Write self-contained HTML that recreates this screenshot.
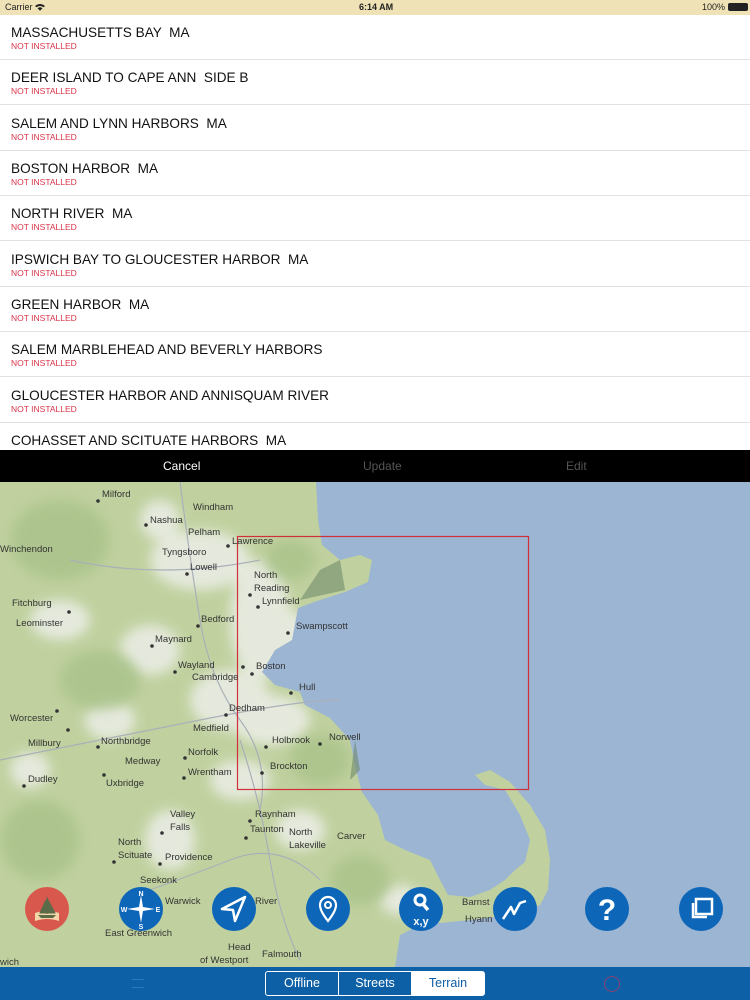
<!DOCTYPE html>
<html><head><meta charset="utf-8">
<style>
*{margin:0;padding:0;box-sizing:border-box}
body{width:750px;height:1000px;overflow:hidden;font-family:"Liberation Sans",sans-serif;background:#fff;position:relative}
.status{position:absolute;top:0;left:0;width:750px;height:15px;background:#efe2b6;font-size:9px;color:#222}
.status span{position:absolute;top:2px}
.row{position:absolute;left:0;width:750px;height:45px;border-bottom:1px solid #e2e2e2}
.row .t{position:absolute;left:11px;top:10px;font-size:13.6px;color:#111;white-space:pre}
.row .s{position:absolute;left:11px;top:26px;font-size:8.5px;color:#d9344a}
.tb{position:absolute;top:450px;left:0;width:750px;height:32px;background:#000;font-size:12px}
.tb span{position:absolute;top:9px}
.map{position:absolute;top:482px;left:0;width:750px;height:485px;overflow:hidden;background:#9bb5d3}
.bb{position:absolute;top:967px;left:0;width:750px;height:33px;background:#0d5fa6}
.seg{position:absolute;top:4px;left:265px;width:220px;height:25px;border:1px solid #fff;border-radius:3px;display:flex;font-size:12.5px}
.seg div{flex:1;text-align:center;line-height:23px;color:#fff;border-right:1px solid #fff}
.seg div:last-child{border:none;background:#fff;color:#0d5fa6}
.btn{position:absolute;top:887px;width:44px;height:44px}
</style></head><body>
<div class="status"><span style="left:5px">Carrier <svg width="10" height="8" viewBox="0 0 10 8" style="vertical-align:-1px"><path d="M0 3 Q5 -1 10 3 L8.6 4.3 Q5 1.6 1.4 4.3Z M2.5 5.2 Q5 3.3 7.5 5.2 L5 7.8Z" fill="#222"/></svg></span><span style="left:359px;font-weight:bold">6:14 AM</span><span style="left:702px">100% <span style="display:inline-block;width:20px;height:8px;border:1px solid #222;border-radius:2px;vertical-align:-1px;position:relative;top:0;background:#222"></span></span></div>

<div class="row" style="top:15px"><div class="t">MASSACHUSETTS BAY  MA</div><div class="s">NOT INSTALLED</div></div>
<div class="row" style="top:60px"><div class="t">DEER ISLAND TO CAPE ANN  SIDE B</div><div class="s">NOT INSTALLED</div></div>
<div class="row" style="top:106px"><div class="t">SALEM AND LYNN HARBORS  MA</div><div class="s">NOT INSTALLED</div></div>
<div class="row" style="top:151px"><div class="t">BOSTON HARBOR  MA</div><div class="s">NOT INSTALLED</div></div>
<div class="row" style="top:196px"><div class="t">NORTH RIVER  MA</div><div class="s">NOT INSTALLED</div></div>
<div class="row" style="top:242px"><div class="t">IPSWICH BAY TO GLOUCESTER HARBOR  MA</div><div class="s">NOT INSTALLED</div></div>
<div class="row" style="top:287px"><div class="t">GREEN HARBOR  MA</div><div class="s">NOT INSTALLED</div></div>
<div class="row" style="top:332px"><div class="t">SALEM MARBLEHEAD AND BEVERLY HARBORS</div><div class="s">NOT INSTALLED</div></div>
<div class="row" style="top:378px"><div class="t">GLOUCESTER HARBOR AND ANNISQUAM RIVER</div><div class="s">NOT INSTALLED</div></div>
<div class="row" style="top:423px;border:none"><div class="t">COHASSET AND SCITUATE HARBORS  MA</div></div>

<div class="tb"><span style="left:163px;color:#fff">Cancel</span><span style="left:363px;color:#555">Update</span><span style="left:566px;color:#555">Edit</span></div>

<div class="map">
<svg width="750" height="485" viewBox="0 482 750 485" style="position:absolute;left:0;top:0">
<defs><filter id="b"><feGaussianBlur stdDeviation="6"/></filter>
<clipPath id="land"><path id="lp" d="M0 482 L316 482 L318 520 L322 545 L340 560 L360 555 L372 560 L368 582 L345 592 L320 600 L298 608 L292 640 L275 650 L262 672 L275 685 L300 692 L305 705 L330 718 L350 740 L356 770 L362 792 L378 815 L385 840 L405 850 L430 860 L440 880 L448 895 L470 897 L490 890 L505 880 L515 870 L525 862 L530 840 L520 815 L505 790 L485 785 L475 775 L490 770 L510 782 L530 805 L545 830 L550 860 L548 890 L540 905 L510 915 L470 920 L420 925 L400 935 L395 967 L0 967Z"/></clipPath></defs>
<path d="M0 482 L316 482 L318 520 L322 545 L340 560 L360 555 L372 560 L368 582 L345 592 L320 600 L298 608 L292 640 L275 650 L262 672 L275 685 L300 692 L305 705 L330 718 L350 740 L356 770 L362 792 L378 815 L385 840 L405 850 L430 860 L440 880 L448 895 L470 897 L490 890 L505 880 L515 870 L525 862 L530 840 L520 815 L505 790 L485 785 L475 775 L490 770 L510 782 L530 805 L545 830 L550 860 L548 890 L540 905 L510 915 L470 920 L420 925 L400 935 L395 967 L0 967Z" fill="#c0d19f"/>
<g clip-path="url(#land)">
<g filter="url(#b)" fill="#eceee8" opacity="0.85">
<ellipse cx="200" cy="560" rx="50" ry="30"/><ellipse cx="260" cy="620" rx="30" ry="60"/><ellipse cx="230" cy="700" rx="40" ry="30"/><ellipse cx="150" cy="650" rx="30" ry="25"/><ellipse cx="60" cy="620" rx="30" ry="20"/><ellipse cx="270" cy="720" rx="40" ry="25"/><ellipse cx="170" cy="840" rx="25" ry="30"/><ellipse cx="110" cy="720" rx="25" ry="20"/><ellipse cx="30" cy="770" rx="20" ry="18"/><ellipse cx="290" cy="640" rx="20" ry="30"/><ellipse cx="240" cy="780" rx="30" ry="20"/><ellipse cx="300" cy="830" rx="25" ry="20"/><ellipse cx="160" cy="520" rx="20" ry="20"/><ellipse cx="400" cy="900" rx="20" ry="15"/>
</g>
<g filter="url(#b)" fill="#a9c28a" opacity="0.8">
<ellipse cx="60" cy="540" rx="50" ry="40"/><ellipse cx="100" cy="680" rx="40" ry="30"/><ellipse cx="40" cy="840" rx="40" ry="40"/><ellipse cx="320" cy="760" rx="30" ry="25"/><ellipse cx="290" cy="560" rx="25" ry="20"/><ellipse cx="360" cy="880" rx="30" ry="25"/>
</g>
</g>
<g stroke="#a9b0b8" stroke-width="1.2" fill="none">
<path d="M0 760 Q100 740 200 720 T340 700"/><path d="M180 482 Q190 560 200 620 T240 720 T260 810"/><path d="M70 560 Q160 580 260 560"/><path d="M120 900 Q180 880 230 860 T320 880"/><path d="M240 740 Q260 800 270 860 T300 960"/>
</g>
<path d="M300 600 L320 570 L340 560 L345 590Z M355 740 L360 770 L350 780Z" fill="#6f8a6a" opacity="0.6"/>
<rect x="237.5" y="536.5" width="291" height="253" fill="none" stroke="#d0303a" stroke-width="1.2"/>
<g font-family="Liberation Sans,sans-serif" font-size="9.5" fill="#333">
<text x="102" y="497">Milford</text><text x="193" y="510">Windham</text><text x="150" y="523">Nashua</text><text x="188" y="535">Pelham</text><text x="0" y="552">Winchendon</text><text x="232" y="544">Lawrence</text><text x="162" y="555">Tyngsboro</text><text x="190" y="570">Lowell</text><text x="254" y="578">North</text><text x="254" y="591">Reading</text><text x="262" y="604">Lynnfield</text><text x="12" y="606">Fitchburg</text><text x="16" y="626">Leominster</text><text x="201" y="622">Bedford</text><text x="296" y="629">Swampscott</text><text x="155" y="642">Maynard</text><text x="178" y="668">Wayland</text><text x="256" y="669">Boston</text><text x="192" y="680">Cambridge</text><text x="299" y="690">Hull</text><text x="229" y="711">Dedham</text><text x="10" y="721">Worcester</text><text x="193" y="731">Medfield</text><text x="329" y="740">Norwell</text><text x="28" y="746">Millbury</text><text x="101" y="744">Northbridge</text><text x="272" y="743">Holbrook</text><text x="188" y="755">Norfolk</text><text x="125" y="764">Medway</text><text x="188" y="775">Wrentham</text><text x="270" y="769">Brockton</text><text x="28" y="782">Dudley</text><text x="106" y="786">Uxbridge</text><text x="170" y="817">Valley</text><text x="170" y="830">Falls</text><text x="255" y="817">Raynham</text><text x="250" y="832">Taunton</text><text x="289" y="835">North</text><text x="289" y="848">Lakeville</text><text x="337" y="839">Carver</text><text x="118" y="845">North</text><text x="118" y="858">Scituate</text><text x="165" y="860">Providence</text><text x="140" y="883">Seekonk</text><text x="165" y="904">Warwick</text><text x="255" y="904">River</text><text x="462" y="905">Barnst</text><text x="105" y="936">East Greenwich</text><text x="228" y="950">Head</text><text x="200" y="963">of Westport</text><text x="262" y="957">Falmouth</text><text x="0" y="965">wich</text><text x="465" y="922">Hyann</text>
</g>
<g fill="#333"><circle cx="98" cy="501" r="1.8"/><circle cx="146" cy="525" r="1.8"/><circle cx="228" cy="546" r="1.8"/><circle cx="187" cy="574" r="1.8"/><circle cx="250" cy="595" r="1.8"/><circle cx="258" cy="607" r="1.8"/><circle cx="69" cy="612" r="1.8"/><circle cx="198" cy="626" r="1.8"/><circle cx="288" cy="633" r="1.8"/><circle cx="152" cy="646" r="1.8"/><circle cx="243" cy="667" r="1.8"/><circle cx="252" cy="674" r="1.8"/><circle cx="175" cy="672" r="1.8"/><circle cx="291" cy="693" r="1.8"/><circle cx="226" cy="715" r="1.8"/><circle cx="57" cy="711" r="1.8"/><circle cx="68" cy="730" r="1.8"/><circle cx="266" cy="747" r="1.8"/><circle cx="320" cy="744" r="1.8"/><circle cx="98" cy="747" r="1.8"/><circle cx="185" cy="758" r="1.8"/><circle cx="184" cy="778" r="1.8"/><circle cx="262" cy="773" r="1.8"/><circle cx="24" cy="786" r="1.8"/><circle cx="104" cy="775" r="1.8"/><circle cx="250" cy="821" r="1.8"/><circle cx="246" cy="838" r="1.8"/><circle cx="162" cy="833" r="1.8"/><circle cx="114" cy="862" r="1.8"/><circle cx="160" cy="864" r="1.8"/></g>
</svg>
</div>

<svg class="btn" style="left:25px" viewBox="0 0 44 44"><circle cx="22" cy="22" r="22" fill="#d9584d"/><path d="M10 26 Q22 22 34 26 L34 34 Q22 30 10 34Z" fill="#f3d6a8"/><path d="M22 10 L22 27 M22 11 L30 26 L22 26Z M21 13 L15 26 L21 26Z" fill="#5a6b4a" stroke="#5a6b4a"/><path d="M13 28 L31 28 L28 31 L16 31Z" fill="#5a6b4a"/></svg>
<svg class="btn" style="left:119px" viewBox="0 0 44 44"><circle cx="22" cy="22" r="22" fill="#0d66b8"/><path d="M22 8 L24 20 L36 22 L24 24 L22 36 L20 24 L8 22 L20 20Z" fill="#fff"/><text x="22" y="9" font-size="7" fill="#fff" text-anchor="middle" font-family="Liberation Sans" font-weight="bold">N</text><text x="22" y="42" font-size="7" fill="#fff" text-anchor="middle" font-family="Liberation Sans" font-weight="bold">S</text><text x="5" y="25" font-size="7" fill="#fff" text-anchor="middle" font-family="Liberation Sans" font-weight="bold">W</text><text x="39" y="25" font-size="7" fill="#fff" text-anchor="middle" font-family="Liberation Sans" font-weight="bold">E</text></svg>
<svg class="btn" style="left:212px" viewBox="0 0 44 44"><circle cx="22" cy="22" r="22" fill="#0d66b8"/><path d="M33 10 L10 22 L21 23 L23 34Z" fill="none" stroke="#fff" stroke-width="2.5" stroke-linejoin="round"/></svg>
<svg class="btn" style="left:306px" viewBox="0 0 44 44"><circle cx="22" cy="22" r="22" fill="#0d66b8"/><path d="M22 34 Q14 24 14 18 A8 8 0 0 1 30 18 Q30 24 22 34Z" fill="none" stroke="#fff" stroke-width="2.2"/><circle cx="22" cy="18" r="3" fill="none" stroke="#fff" stroke-width="2"/></svg>
<svg class="btn" style="left:399px" viewBox="0 0 44 44"><circle cx="22" cy="22" r="22" fill="#0d66b8"/><circle cx="21" cy="13" r="5" fill="none" stroke="#fff" stroke-width="3"/><path d="M24 17 L29 23" stroke="#fff" stroke-width="3.5"/><text x="22" y="38" font-size="11" fill="#fff" text-anchor="middle" font-family="Liberation Sans" font-weight="bold">x,y</text></svg>
<svg class="btn" style="left:493px" viewBox="0 0 44 44"><circle cx="22" cy="22" r="22" fill="#0d66b8"/><path d="M10 32 L18 20 L21 27 L27 16 L33 14" fill="none" stroke="#fff" stroke-width="2.5" stroke-linejoin="round"/></svg>
<svg class="btn" style="left:585px" viewBox="0 0 44 44"><circle cx="22" cy="22" r="22" fill="#0d66b8"/><text x="22" y="33" font-size="30" fill="#fff" text-anchor="middle" font-family="Liberation Sans" font-weight="bold">?</text></svg>
<svg class="btn" style="left:679px" viewBox="0 0 44 44"><circle cx="22" cy="22" r="22" fill="#0d66b8"/><path d="M14 16 L14 30 L28 30" fill="none" stroke="#fff" stroke-width="2.5"/><rect x="17" y="12" width="16" height="15" fill="none" stroke="#fff" stroke-width="2.5"/></svg>

<div class="bb">
<div style="position:absolute;left:132px;top:12px;width:12px;height:9px;border-top:1px solid #2d78bd;border-bottom:1px solid #2d78bd"></div>
<div class="seg"><div>Offline</div><div>Streets</div><div>Terrain</div></div>
<div style="position:absolute;left:604px;top:9px;width:16px;height:16px;border-radius:50%;border:1.5px solid #c0345a;opacity:.7"></div>
</div>
</body></html>
